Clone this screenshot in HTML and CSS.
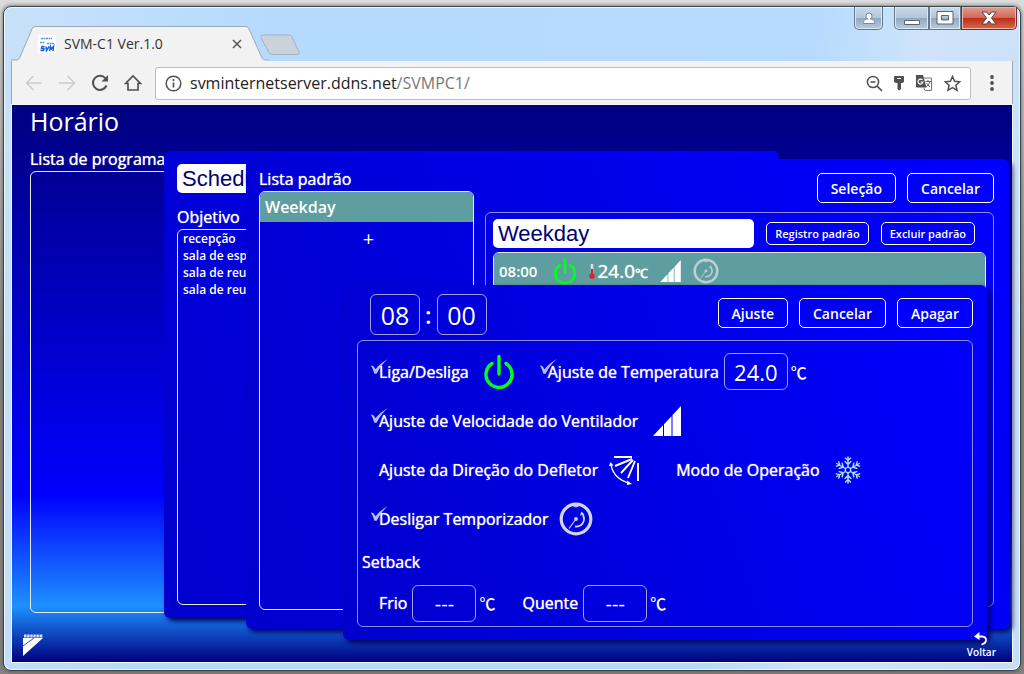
FILE: index.html
```html
<!DOCTYPE html>
<html lang="pt-BR">
<head>
<meta charset="utf-8">
<title>SVM-C1 Ver.1.0</title>
<link rel="stylesheet" href="styles.css">
</head>
<body>
<svg class="defs" width="0" height="0" aria-hidden="true">
  <symbol id="power" viewBox="0 0 32 36">
    <path d="M9 9.5A13 13 0 1 0 23 9.5M16 2.5V20" fill="none" stroke="#00ff1e" stroke-width="3.4" stroke-linecap="round"/>
  </symbol>
  <symbol id="fan" viewBox="0 0 28 30">
    <path d="M0 30L10 19.300V30ZM11 30V18.200L18.500 10.200V30ZM19.500 30V9.100L28 0V30Z" fill="#fff"/>
  </symbol>
  <symbol id="timer" viewBox="0 0 34 34">
    <circle cx="17" cy="17" r="14.800" fill="none" stroke="currentColor" stroke-width="3.200"/>
    <path d="M17 3V5.500M15 4L15.500 5M19 4L18.500 5" stroke="currentColor" stroke-width="1.500"/>
    <path d="M10 26.500L17 17" stroke="currentColor" stroke-width="1.200"/>
    <circle cx="17" cy="17" r="1.900" fill="currentColor"/>
    <path d="M16 24.500C23 25 27 19 24 13" fill="none" stroke="currentColor" stroke-width="1.800"/>
    <path d="M21 13.500L22.500 9.500L25.500 12.500Z" fill="currentColor"/>
  </symbol>
</svg>

<div class="window">
  <header class="titlebar">
    <div class="tab">
      <svg class="tab-shape" viewBox="0 0 258 35" preserveAspectRatio="none" aria-hidden="true"><path d="M0 34H6Q8 34 9 31L21 3Q22 .5 24 .5H235Q237 .5 238 3L251 32Q252 34 254 34H258V35H0Z" fill="#f2f2f2"/><path d="M0 34H6Q8 34 9 31L21 3Q22 .5 24 .5H235Q237 .5 238 3L251 32Q252 34 254 34H258" fill="none" stroke="#9aa9b8"/></svg>
      <svg class="favicon" viewBox="0 0 18 18" aria-hidden="true"><path d="M0 0H18V18H0Z" fill="#fff"/><path d="M3 3.500H14M2 7.500H7M9 8.500H16" stroke="#5599d0" stroke-width="1.400" stroke-dasharray="2 .5"/><path d="M6.500 11.500H4L3.500 13.500H6L5.500 15.500H2.500M8 11.500L8.500 15.500L11 11.500M11.500 16L12.500 11.500L13.500 14L15.500 11.500L15 16" fill="none" stroke="#1664dc" stroke-width="1.500"/></svg>
      <span class="tab-title">SVM-C1 Ver.1.0</span>
      <button class="icon-btn" aria-label="Fechar guia"><svg width="10" height="10" viewBox="0 0 10 10"><path d="M1 1L9 9M9 1L1 9" stroke="#555" stroke-width="1.500"/></svg></button>
    </div>
    <button class="new-tab" aria-label="Nova guia"><svg width="42" height="22" viewBox="0 0 42 22"><path d="M4 1H30Q32 1 33 3L40 18Q41 20.500 38 20.500H13Q11 20.500 10 18.500L2 4Q1 1 4 1Z" fill="#cbd2da" stroke="#a3b1bf"/></svg></button>
    <div class="controls">
      <button class="win-btn user" aria-label="Usuário"><svg width="14" height="14" viewBox="0 0 14 14"><path d="M4 5a3 3 0 1 1 6 0a3 3 0 0 1-2 3C11 8 13 9.500 12.500 12.500H1.500C1 9.500 3 8 6 8A3 3 0 0 1 4 5Z" fill="#fff" stroke="#7c8b9a"/></svg></button>
      <div class="win-group">
        <button class="win-btn minimize" aria-label="Minimizar"><svg width="18" height="8" viewBox="0 0 18 8"><path d="M1.500 2.500H16.500V6.500H1.500Z" fill="#fff" stroke="#566475"/></svg></button>
        <button class="win-btn" aria-label="Maximizar"><svg width="18" height="14" viewBox="0 0 18 14"><path fill-rule="evenodd" d="M1 .5H17V13H1ZM5.500 4.500V9H12.500V4.500Z" fill="#fff" stroke="#566475"/></svg></button>
        <button class="win-btn close" aria-label="Fechar"><svg width="16" height="14" viewBox="0 0 16 14"><path d="M1 1H5.500L8 4L10.500 1H15L10.500 7L15 13H10.500L8 10L5.500 13H1L5.500 7Z" fill="#fff" stroke="#53454e"/></svg></button>
      </div>
    </div>
  </header>

  <nav class="toolbar">
    <button class="icon-btn" aria-label="Voltar página"><svg width="18" height="16" viewBox="0 0 18 16"><path d="M17 8H2M8.500 1L1.500 8L8.500 15" fill="none" stroke="#ccc" stroke-width="1.600"/></svg></button>
    <button class="icon-btn" aria-label="Avançar página"><svg width="18" height="16" viewBox="0 0 18 16"><path d="M1 8H16M9.500 1L16.500 8L9.500 15" fill="none" stroke="#ccc" stroke-width="1.600"/></svg></button>
    <button class="icon-btn" aria-label="Recarregar"><svg width="18" height="18" viewBox="0 0 18 18"><path d="M15.500 11.500A7 7 0 1 1 14.500 4.500" fill="none" stroke="#505050" stroke-width="2"/><path d="M17 1V7.500H10.500Z" fill="#505050"/></svg></button>
    <button class="icon-btn" aria-label="Página inicial"><svg width="18" height="18" viewBox="0 0 18 18"><path d="M1.500 9.500L9 2L16.500 9.500H14V16H4V9.500Z" fill="none" stroke="#505050" stroke-width="1.700"/></svg></button>
    <div class="omnibox">
      <svg width="17" height="17" viewBox="0 0 17 17" aria-hidden="true"><circle cx="8.500" cy="8.500" r="7.300" fill="none" stroke="#505050" stroke-width="1.500"/><path d="M8.500 7.500V12.500M8.500 4V6" stroke="#505050" stroke-width="1.700"/></svg>
      <div class="url">svminternetserver.ddns.net<span>/SVMPC1/</span></div>
      <div class="page-actions">
        <button class="icon-btn" aria-label="Zoom"><svg width="17" height="17" viewBox="0 0 17 17"><circle cx="7" cy="7" r="5.600" fill="none" stroke="#505050" stroke-width="1.500"/><path d="M4.500 7H9.500M11 11L16 16" stroke="#505050" stroke-width="1.700"/></svg></button>
        <button class="icon-btn" aria-label="Senha"><svg width="10" height="16" viewBox="0 0 10 16"><path fill-rule="evenodd" d="M1 1H9Q10 1 10 2V6Q10 8 7 8V14L5 15.500L3.500 14V8Q0 8 0 6V2Q0 1 1 1ZM3 3V4H7V3Z" fill="#505050"/></svg></button>
        <button class="icon-btn" aria-label="Traduzir"><svg width="18" height="18" viewBox="0 0 18 18"><path d="M1 1H8L11.500 13.500H2Q1 13.500 1 12.500Z" fill="#505050"/><path d="M8 4H16.500V16.500H10L8.500 13.500" fill="none" stroke="#777"/><path d="M7.500 6A2.500 2.500 0 1 0 8 8H5.500" fill="none" stroke="#fff" stroke-width="1.200"/><path d="M10.500 7.500H16M13 6V7.500M15 7.500Q14 11 11 13M11.500 9L15 13" fill="none" stroke="#666"/></svg></button>
        <button class="icon-btn" aria-label="Favorito"><svg width="17" height="17" viewBox="0 0 17 17"><path d="M8.500 1.500L10.600 6.300L15.800 6.800L11.900 10.200L13 15.300L8.500 12.600L4 15.300L5.100 10.200L1.200 6.800L6.400 6.300Z" fill="none" stroke="#505050" stroke-width="1.500"/></svg></button>
      </div>
    </div>
    <button class="icon-btn menu" aria-label="Menu"><svg width="4" height="16" viewBox="0 0 4 16"><circle cx="2" cy="2" r="1.900" fill="#505050"/><circle cx="2" cy="8" r="1.900" fill="#505050"/><circle cx="2" cy="14" r="1.900" fill="#505050"/></svg></button>
  </nav>

  <main class="app">
    <h1>Horário</h1>
    <h2>Lista de programa</h2>
    <div class="box programs"></div>
    <footer class="app-footer">
      <svg width="21" height="22" viewBox="0 0 21 22" role="img" aria-label="Logo"><path d="M0 4H20L0 22Z" fill="#fff"/><path d="M0 12L11 4" stroke="#3355b0"/><path d="M1 2H20" stroke="#d5def5" stroke-width="3" stroke-dasharray="2.500 .6"/></svg>
      <button class="back"><svg width="14" height="14" viewBox="0 0 14 14" aria-hidden="true"><path d="M3 4.500H8Q12.500 5 12 8.500Q11.500 11.500 7.500 12.500" fill="none" stroke="#fff" stroke-width="1.800"/><path d="M0 4.500L5.500 0V8Z" fill="#fff"/></svg>Voltar</button>
    </footer>

    <section class="dialog schedule">
      <input class="name" aria-label="Nome do programa" value="Schedu">
      <h2>Objetivo</h2>
      <ul class="box targets"><li>recepção</li><li>sala de esp</li><li>sala de reu</li><li>sala de reu</li></ul>
    </section>

    <section class="dialog pattern">
      <div class="pattern-list">
        <h2>Lista padrão</h2>
        <div class="box">
          <button class="selected">Weekday</button>
          <button class="add">+</button>
        </div>
      </div>
      <div class="pattern-detail">
        <div class="actions"><button class="btn">Seleção</button><button class="btn">Cancelar</button></div>
        <div class="box dim detail">
          <div class="name-row">
            <input class="name" aria-label="Nome do padrão" value="Weekday">
            <button class="btn small">Registro padrão</button>
            <button class="btn small">Excluir padrão</button>
          </div>
          <div class="box events">
            <div class="event">
              <span>08:00</span>
              <svg class="ev-power" aria-label="Ligado"><use href="#power"/></svg>
              <svg class="thermo" viewBox="0 0 6 16" aria-hidden="true"><path d="M3 1V11" stroke="#dde" stroke-width="2.500"/><path d="M3 6V12" stroke="#c22" stroke-width="2"/><circle cx="3" cy="13" r="2.700" fill="#e02020"/></svg>
              <span class="ev-temp">24.0<small>℃</small></span>
              <svg class="ev-fan" aria-label="Ventilador"><use href="#fan"/></svg>
              <svg class="ev-timer" aria-label="Temporizador"><use href="#timer"/></svg>
            </div>
          </div>
        </div>
      </div>
    </section>

    <section class="dialog action">
      <div class="action-head">
        <div class="time"><input class="field hour" aria-label="Hora" value="08"><span>:</span><input class="field hour" aria-label="Minuto" value="00"></div>
        <div class="actions"><button class="btn">Ajuste</button><button class="btn">Cancelar</button><button class="btn">Apagar</button></div>
      </div>
      <div class="box dim form">
        <div class="row">
          <label><input type="checkbox" checked>Liga/Desliga</label>
          <button class="icon-btn power" aria-label="Ligado"><svg width="32" height="36"><use href="#power"/></svg></button>
          <label class="temp-label"><input type="checkbox" checked>Ajuste de Temperatura</label>
          <input class="field" aria-label="Temperatura" value="24.0"><span class="unit">℃</span>
        </div>
        <div class="row">
          <label><input type="checkbox" checked>Ajuste de Velocidade do Ventilador</label>
          <button class="icon-btn fan" aria-label="Velocidade"><svg width="28" height="30"><use href="#fan"/></svg></button>
        </div>
        <div class="row">
          <label><input type="checkbox">Ajuste da Direção do Defletor</label>
          <button class="icon-btn vane" aria-label="Direção"><svg width="30" height="30" viewBox="0 0 30 30"><path d="M5 2H23M23 4L6 11M24 5L12 18M26 6L19 23M29 8V26" fill="none" stroke="#fff" stroke-width="1.900"/><path d="M2 10Q5 24 20 28" fill="none" stroke="#fff" stroke-width="1.200"/><path d="M0 11L1.500 7L4.500 10.500ZM18 25.500L23 29L18 30Z" fill="#fff"/></svg></button>
          <label class="mode-label"><input type="checkbox">Modo de Operação</label>
          <button class="icon-btn snow" aria-label="Frio"><svg width="28" height="28" viewBox="-14 -14 28 28"><g fill="none" stroke="#a5e6ff" stroke-width="1.400" stroke-linecap="round"><g id="arm"><path d="M0 -3V-13M-2.500 -12L0 -9.500L2.500 -12M-3 -8.500L0 -5.500L3 -8.500M0 -3L2.600 -1.500"/></g><use href="#arm" transform="rotate(60)"/><use href="#arm" transform="rotate(120)"/><use href="#arm" transform="rotate(180)"/><use href="#arm" transform="rotate(240)"/><use href="#arm" transform="rotate(300)"/></g></svg></button>
        </div>
        <div class="row">
          <label><input type="checkbox" checked>Desligar Temporizador</label>
          <button class="icon-btn timer" aria-label="Temporizador"><svg width="34" height="34"><use href="#timer"/></svg></button>
        </div>
        <h3>Setback</h3>
        <div class="row setback">
          <label for="cool">Frio</label><input class="field" id="cool" value="---"><span class="unit">℃</span>
          <label class="heat-label" for="heat">Quente</label><input class="field" id="heat" value="---"><span class="unit">℃</span>
        </div>
      </div>
    </section>
  </main>
</div>
</body>
</html>
```
FILE: styles.css
```css
* { box-sizing: border-box; }

body {
  margin: 0;
  min-height: 100vh;
  display: flex;
  padding: 6px 3px 3px 3px;
  background: linear-gradient(#dcdcdc, #8a8785 50%, #858280);
  font-family: "Open Sans", "Noto Sans", "Noto Sans CJK JP", sans-serif;
}

h1, h2, h3, ul { margin: 0; padding: 0; font-weight: 500; }
button, input { font: inherit; color: inherit; margin: 0; }
button { padding: 0; border: 0; background: none; white-space: nowrap; }
svg { display: block; flex: none; }
.defs { position: absolute; }

.icon-btn { display: flex; flex: none; align-items: center; }

.window {
  flex: 1;
  display: flex;
  flex-direction: column;
  padding: 0 7px 8px;
  border: 1px solid #39444c;
  border-radius: 8px;
  background: linear-gradient(100deg, #c8e1fa, #b4dafe 25%, #b6dbfe 72%, #cfe4fa 82%, #c6def6);
  box-shadow: inset 0 0 0 1px #edf7ff, 0 0 4px #555;
}

/* Browser title bar */
.titlebar { display: flex; height: 54px; align-items: flex-end; }
.tab {
  position: relative;
  display: flex;
  align-items: center;
  width: 258px;
  height: 35px;
  padding: 0 27px;
}
.tab-shape { position: absolute; inset: 0; width: 100%; height: 100%; }
.tab > :not(.tab-shape) { position: relative; }
.favicon { width: 18px; height: 18px; }
.tab-title { flex: 1; margin-left: 8px; font-size: 14px; color: #333; }
.new-tab { margin: 0 0 5px -10px; }
.controls { display: flex; gap: 11px; align-self: flex-start; margin-left: auto; margin-right: -4px; }
.win-group { display: flex; }
.win-btn {
  display: flex;
  align-items: center;
  justify-content: center;
  width: 32px;
  height: 23px;
  border: 1px solid #63788f;
  border-top: 0;
  background: linear-gradient(#c8d9ea, #b3c6da 48%, #92a9c1 52%, #b4cbe1);
  box-shadow: inset 0 0 0 1px #dbe8f4;
}
.win-btn.user { width: 29px; border-radius: 0 0 5px 5px; }
.win-btn.minimize { width: 35px; padding-top: 8px; border-radius: 0 0 0 5px; }
.win-btn.close {
  width: 56px;
  border-radius: 0 0 5px 0;
  border-color: #6d3038;
  background: linear-gradient(#e29c8e, #d2695a 48%, #be2f18 52%, #d9684c);
  box-shadow: inset 0 0 0 1px #eeb5a9;
}

/* Browser toolbar */
.toolbar {
  display: flex;
  align-items: center;
  height: 44px;
  padding: 0 18px 0 13px;
  gap: 15px;
  background: #f2f2f2;
  border-left: 1px solid #98a8b8;
  border-right: 1px solid #98a8b8;
}
.omnibox {
  flex: 1;
  display: flex;
  align-items: center;
  gap: 8px;
  height: 33px;
  margin-left: -2px;
  padding: 0 9px;
  border: 1px solid #bdbdbd;
  border-radius: 3px;
  background: #fff;
}
.page-actions { display: flex; align-items: center; gap: 11px; }
.url { flex: 1; font-size: 16px; color: #222; }
.url span { color: #777; }
.menu { margin-left: 4px; }

/* Application */
.app {
  position: relative;
  flex: 1;
  display: flex;
  flex-direction: column;
  margin: 0 1px;
  padding: 0 18px;
  outline: 1px solid #f4f9ff;
  background: linear-gradient(navy, blue 70%, dodgerblue 90%, navy);
  color: #fff;
  font-weight: 600;
  font-size: 15px;
}
h1 { font-size: 25px; line-height: 32px; font-weight: 400; }
h2, h3, .row label { font-size: 16px; font-weight: 500; line-height: 24px; text-shadow: 0 0 1px #fff; }
.app > h2 { margin-top: 10px; }
.box { border: 1px solid #e4e9ff; border-radius: 6px; }
.dim { border-color: #8c8cf0; }
.programs { flex: 1; }
.app-footer {
  position: relative;
  z-index: 2;
  display: flex;
  justify-content: space-between;
  align-items: center;
  height: 49px;
  margin: 0 -2px 0 -7px;
  padding-top: 14px;
}
.back { display: flex; flex-direction: column; align-items: center; font-size: 10px; line-height: 12px; }

.dialog {
  position: absolute;
  display: flex;
  border-radius: 6px;
  background: linear-gradient(70deg, #0000cd, #0000ff);
  box-shadow: 3px 3px 5px #000060;
}
.schedule { inset: 46px 233px 44px 152px; flex-direction: column; padding: 13px 13px; }
.pattern { inset: 54px 3px 33px 234px; padding: 8px 15px 19px 13px; gap: 11px; }
.action { inset: 180px 25px 22px 331px; flex-direction: column; padding: 9px 14px 13px; gap: 5px; }

.name {
  min-width: 0;
  height: 29px;
  padding: 0 5px;
  border: 0;
  border-radius: 5px;
  background: #fff;
  color: #000070;
  font: 22px "Liberation Sans", sans-serif;
}
.schedule h2 { margin-top: 12px; }
.targets { flex: 1; padding: 0 5px; list-style: none; font-size: 12px; font-weight: 600; line-height: 17px; }

.pattern-list { display: flex; flex: none; flex-direction: column; width: 215px; }
.pattern-list .box { flex: 1; display: flex; flex-direction: column; overflow: hidden; }
.selected { height: 30px; padding: 0 5px; background: #5f9ea0; text-align: left; }
.add { height: 32px; padding-left: 4px; font-size: 20px; font-weight: 400; }

.pattern-detail { flex: 1; min-width: 0; display: flex; flex-direction: column; gap: 9px; padding-top: 6px; }
.actions { display: flex; justify-content: flex-end; gap: 11px; }
.btn {
  height: 30px;
  padding: 0 13px;
  border: 1px solid #fff;
  border-radius: 5px;
  font-size: 14px;
}
.btn.small { height: 23px; padding: 0 8px; font-size: 11px; }
.detail { flex: 1; display: flex; flex-direction: column; gap: 4px; margin-bottom: 3px; padding: 6px 7px; }
.name-row { display: flex; align-items: center; gap: 12px; padding-right: 11px; }
.name-row .name { flex: 1; }
.events { flex: 1; overflow: hidden; }
.event { display: flex; align-items: center; height: 36px; padding: 0 5px; background: #5f9ea0; }
.ev-power { width: 24px; height: 27px; margin-left: 16px; }
.thermo { width: 6px; height: 16px; margin-left: 12px; }
.ev-temp { margin-left: 2px; font-size: 19px; font-weight: 500; text-shadow: 0 0 1px #fff; }
.ev-temp small { font-size: 13px; }
.ev-fan { width: 21px; height: 22px; margin-left: 12px; }
.ev-timer { width: 26px; height: 26px; margin-left: 12px; color: #bdd0d4; }

.action-head { display: flex; justify-content: space-between; }
.action-head .actions { padding-top: 4px; align-items: flex-start; }
.time { display: flex; align-items: center; gap: 5px; padding-left: 13px; font-size: 24px; }
.field {
  width: 64px;
  height: 37px;
  padding: 0;
  border: 1px solid #a0a0f8;
  border-radius: 6px;
  background: none;
  text-align: center;
  font-size: 22px;
  font-weight: 500;
}
.field.hour { width: 50px; height: 41px; font-size: 25px; }

.form { flex: 1; display: flex; flex-direction: column; padding: 6px 4px 0; }
.row { display: flex; align-items: center; height: 49px; padding-left: 9px; }
.row label { display: flex; align-items: center; white-space: nowrap; }
input[type="checkbox"] {
  appearance: none;
  width: 18px;
  height: 18px;
  margin: -8px -10px 0 0;
}
input[type="checkbox"]:checked {
  background: url("data:image/svg+xml,%3Csvg xmlns='http://www.w3.org/2000/svg' viewBox='0 0 16 16'%3E%3Cpath d='M0 6Q2 5 4 9Q8 4 15 0Q9 5 5 13H3Q2 9 0 6Z' fill='%23b9b9ff'/%3E%3C/svg%3E");
}
.power { margin-left: 14px; }
.fan { margin-left: 15px; }
.vane { margin-left: 11px; }
.snow { margin-left: 14px; }
.timer { margin-left: 10px; color: #d4d4ee; }
.temp-label { margin-left: 25px; }
.temp-label + .field { margin-left: 5px; }
.mode-label { margin-left: 29px; }
.unit { margin-left: 3px; font-family: "Noto Sans CJK JP", sans-serif; font-size: 16px; font-weight: 500; line-height: 24px; }
.form h3 { line-height: 38px; }
.row.setback { height: 44px; padding-left: 17px; }
.setback .field { margin-left: 5px; font-size: 20px; }
.heat-label { margin-left: 27px; }

.targets li { font-weight: 600; }
.selected { font-size: 16px; }
```
